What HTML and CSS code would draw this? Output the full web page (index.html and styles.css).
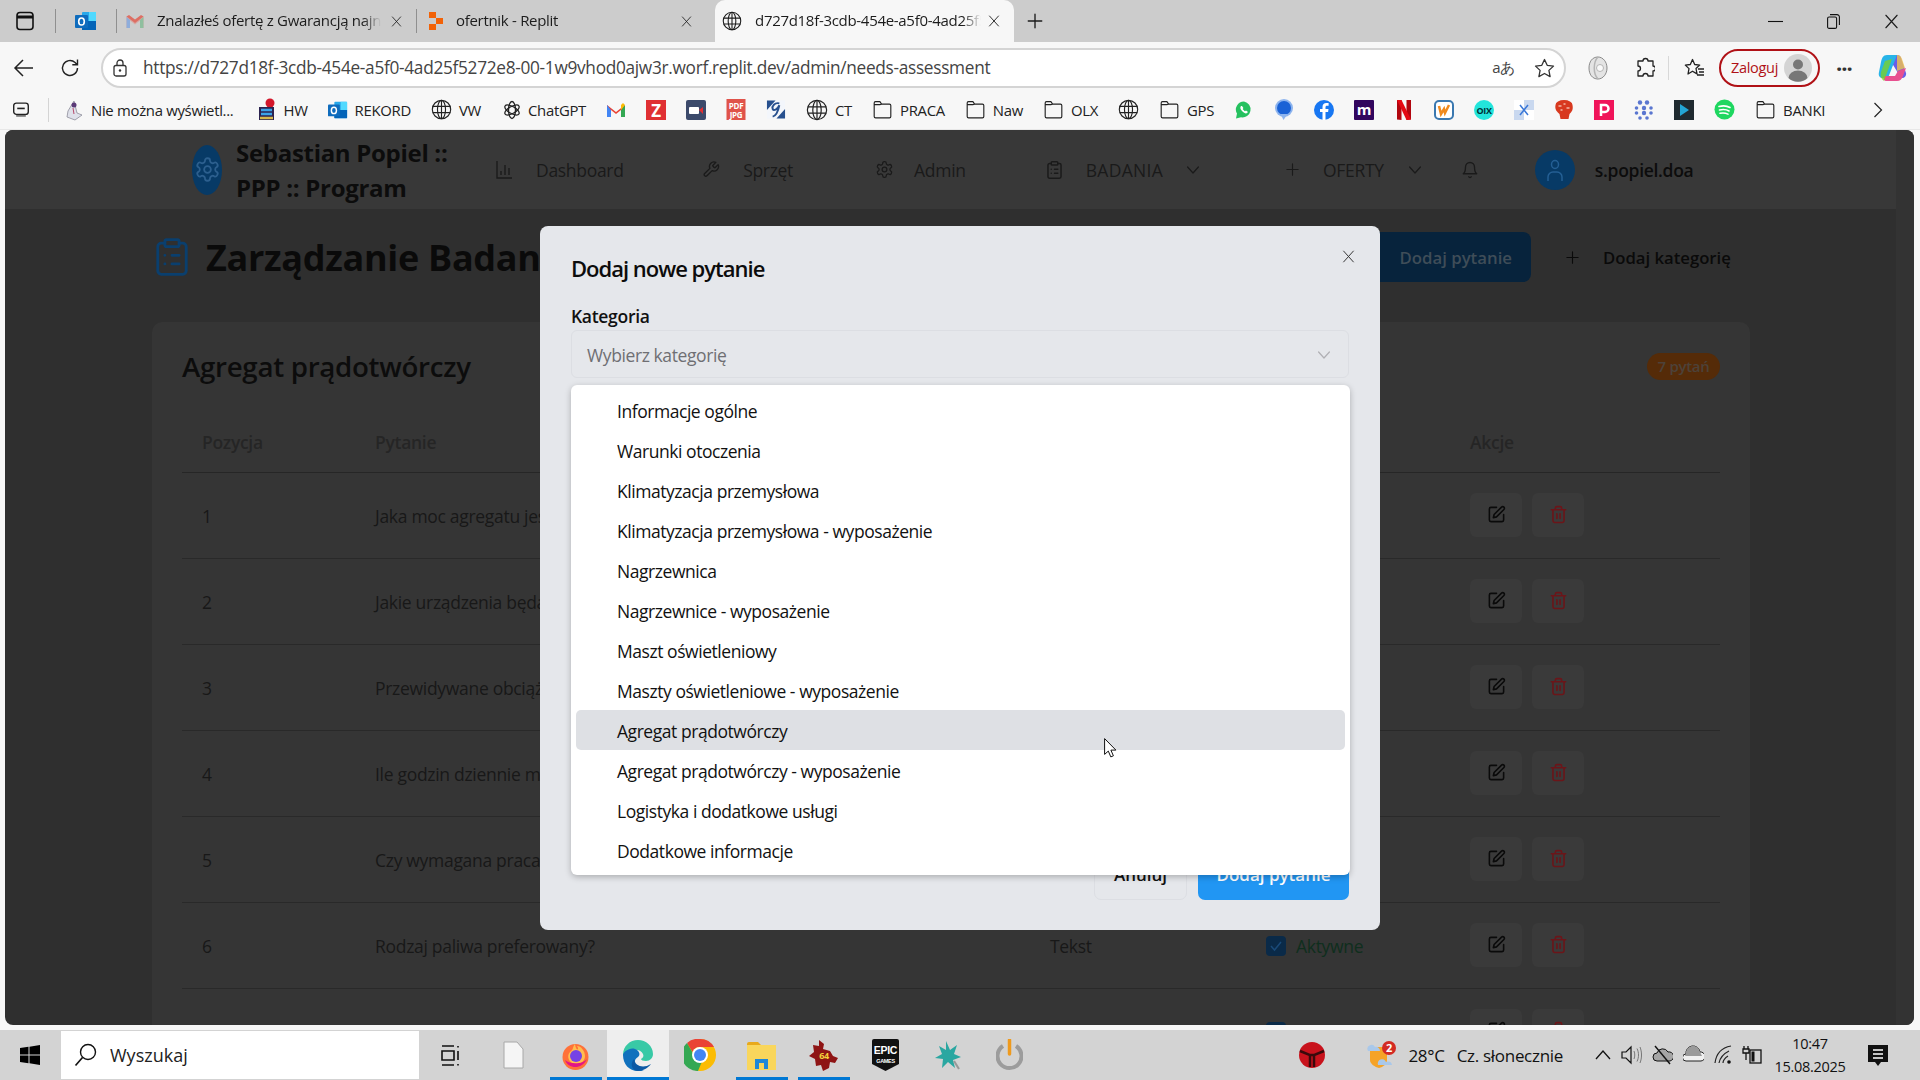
FILE: index.html
```html
<!DOCTYPE html>
<html lang="pl">
<head>
<meta charset="utf-8">
<title>Dodaj nowe pytanie</title>
<link rel="stylesheet" href="styles.css">
</head>
<body>
<svg class="defs" width="0" height="0">
	<symbol id="i-globe" viewBox="0 0 24 24"><g fill="none" stroke="currentColor" stroke-width="1.3"><circle cx="12" cy="12" r="10.5"/><ellipse cx="12" cy="12" rx="4.6" ry="10.5"/><path d="M2 8.5h20M2 15.5h20M12 1.5v21"/></g></symbol>
	<symbol id="i-folder" viewBox="0 0 24 24"><path fill="none" stroke="currentColor" stroke-width="1.3" d="M2.5 6.5V20a1.6 1.6 0 0 0 1.6 1.6h15.8a1.6 1.6 0 0 0 1.6-1.6V7.500a1.600 1.600 0 0 0-1.600-1.600H11L9 3H4a1.600 1.600 0 0 0-1.500 1.600zM2.500 6.500H9l2-.6"/></symbol>
	<symbol id="i-outlook" viewBox="0 0 22 22"><rect x="7" y="2" width="14" height="18" rx="1" fill="#28a8ea"/><rect x="14" y="2" width="7" height="9" fill="#50d9ff"/><rect x="7" y="11" width="14" height="9" fill="#0364b8"/><rect x="0" y="5" width="13" height="13" rx="1" fill="#0f6cbd"/><ellipse cx="6.500" cy="11.500" rx="2.800" ry="3.500" fill="none" stroke="#fff" stroke-width="1.600"/></symbol>
	<symbol id="i-gear" viewBox="0 0 24 24"><g fill="none" stroke="currentColor" stroke-width="1.6" stroke-linecap="round" stroke-linejoin="round"><path d="M12.220 2h-.44a2 2 0 0 0-2 2v.18a2 2 0 0 1-1 1.730l-.43.25a2 2 0 0 1-2 0l-.15-.08a2 2 0 0 0-2.730.73l-.22.38a2 2 0 0 0 .73 2.730l.15.1a2 2 0 0 1 1 1.720v.51a2 2 0 0 1-1 1.740l-.15.09a2 2 0 0 0-.73 2.730l.22.38a2 2 0 0 0 2.730.73l.15-.08a2 2 0 0 1 2 0l.43.25a2 2 0 0 1 1 1.730V20a2 2 0 0 0 2 2h.44a2 2 0 0 0 2-2v-.18a2 2 0 0 1 1-1.730l.43-.25a2 2 0 0 1 2 0l.15.08a2 2 0 0 0 2.730-.73l.22-.39a2 2 0 0 0-.73-2.730l-.15-.08a2 2 0 0 1-1-1.740v-.5a2 2 0 0 1 1-1.740l.15-.09a2 2 0 0 0 .73-2.730l-.22-.38a2 2 0 0 0-2.730-.73l-.15.08a2 2 0 0 1-2 0l-.43-.25a2 2 0 0 1-1-1.730V4a2 2 0 0 0-2-2z"/><circle cx="12" cy="12" r="3"/></g></symbol>
	<symbol id="i-clip" viewBox="3 1 18 22"><g fill="none" stroke="currentColor" stroke-width="1.800" stroke-linecap="round" stroke-linejoin="round"><rect x="8" y="2" width="8" height="4" rx="1"/><path d="M16 4h2a2 2 0 0 1 2 2v14a2 2 0 0 1-2 2H6a2 2 0 0 1-2-2V6a2 2 0 0 1 2-2h2M12 11h4M12 16h4M8 11h.01M8 16h.01"/></g></symbol>
	<symbol id="i-plus" viewBox="0 0 24 24"><path fill="none" stroke="currentColor" stroke-width="1.8" stroke-linecap="round" d="M12 3v18M3 12h18"/></symbol>
	<symbol id="i-chev" viewBox="2 6 20 12"><path fill="none" stroke="currentColor" stroke-width="2" stroke-linecap="round" stroke-linejoin="round" d="m3 7 9 10 9-10"/></symbol>
	<symbol id="i-x" viewBox="0 0 24 24"><path fill="none" stroke="currentColor" stroke-width="1.800" stroke-linecap="round" d="m3 2 18 20M21 2 3 22"/></symbol>
	<symbol id="i-edit" viewBox="0 0 24 24"><g fill="none" stroke="currentColor" stroke-width="2" stroke-linecap="round" stroke-linejoin="round"><path d="M12 3H5a2 2 0 0 0-2 2v14a2 2 0 0 0 2 2h14a2 2 0 0 0 2-2v-7"/><path d="M18.375 2.625a2.121 2.121 0 1 1 3 3L12 15l-4 1 1-4Z"/></g></symbol>
	<symbol id="i-trash" viewBox="0 0 24 24"><path fill="none" stroke="currentColor" stroke-width="2" stroke-linecap="round" stroke-linejoin="round" d="M3 6h18M19 6v14c0 1-1 2-2 2H7c-1 0-2-1-2-2V6M8 6V4c0-1 1-2 2-2h4c1 0 2 1 2 2v2M10 11v6M14 11v6"/></symbol>
</svg>

<div class="browser">
	<div class="tabstrip">
		<svg class="side-btn" width="20" height="20" viewBox="0 0 20 20"><rect x="2" y="1.500" width="16" height="17" rx="3" fill="none" stroke="#111" stroke-width="1.600"/><path d="M2 6h16" stroke="#111" stroke-width="3"/></svg>
		<span class="tab-sep"></span>
		<span class="pinned-tab"><svg width="22" height="22"><use href="#i-outlook"/></svg></span>
		<span class="tab-sep"></span>
		<div class="tab tab-gmail">
			<svg width="20" height="16" viewBox="0 0 20 16"><path d="M1.500 15V3l8.500 6.500L18.500 3v12h-3.500V7.500L10 11.500 5 7.500V15z" fill="#d8a7a2"/><path d="M1.500 3.500 4 2l6 4.500L16 2l2.500 1.500L10 10z" fill="#dd6e63"/><path d="M15 15h3.500V4L15 7z" fill="#8fbf9f"/><path d="M1.500 15H5V7L1.500 4z" fill="#8eaddb"/></svg>
			<span class="tab-title">Znalazłeś ofertę z Gwarancją najniższej ceny</span>
			<svg class="tab-close" width="11" height="11"><use href="#i-x"/></svg>
		</div>
		<span class="tab-sep"></span>
		<div class="tab tab-replit">
			<svg width="14" height="20" viewBox="0 0 14 20"><path d="M0 1h7v6H0zM7 7h7v6H7zM0 13h7v6H0z" fill="#f26207"/></svg>
			<span class="tab-title">ofertnik - Replit</span>
			<svg class="tab-close" width="11" height="11"><use href="#i-x"/></svg>
		</div>
		<div class="tab tab-active">
			<svg width="20" height="20"><use href="#i-globe"/></svg>
			<span class="tab-title">d727d18f-3cdb-454e-a5f0-4ad25f5272e8-00-1w9vhod0ajw3r</span>
			<svg class="tab-close" width="12" height="12"><use href="#i-x"/></svg>
		</div>
		<svg class="new-tab" width="18" height="18"><use href="#i-plus"/></svg>
		<div class="win-btns">
			<svg width="15" height="15" viewBox="0 0 15 15"><path d="M0 7.500h15" stroke="#111" stroke-width="1.100"/></svg>
			<svg width="13" height="15" viewBox="0 0 13 15"><rect x=".6" y="3" width="9" height="11.400" rx="1.500" fill="none" stroke="#111" stroke-width="1.100"/><path d="M3 .6h7a2.400 2.400 0 0 1 2.400 2.400v8" fill="none" stroke="#111" stroke-width="1.100"/></svg>
			<svg width="15" height="15"><use href="#i-x"/></svg>
		</div>
	</div>

	<div class="toolbar">
		<svg class="tb-back" width="21" height="20" viewBox="0 0 21 20"><path d="M20 10H2M10 2l-8 8 8 8" fill="none" stroke="#222" stroke-width="1.500"/></svg>
		<svg class="tb-reload" width="20" height="20" viewBox="0 0 20 20"><path d="M17.500 10a7.500 7.500 0 1 1-2.400-5.500L17 6.500M17.500 1.500v5.200h-5.200" fill="none" stroke="#222" stroke-width="1.400"/></svg>
		<div class="address">
			<svg width="14" height="18" viewBox="0 0 14 18"><rect x="1" y="6.500" width="12" height="10.500" rx="2" fill="none" stroke="#333" stroke-width="1.300"/><path d="M4 6.500V4a3 3 0 0 1 6 0v2.500" fill="none" stroke="#333" stroke-width="1.300"/><circle cx="7" cy="11.500" r="1.200" fill="#333"/></svg>
			<span class="url">https://d727d18f-3cdb-454e-a5f0-4ad25f5272e8-00-1w9vhod0ajw3r.worf.replit.dev/admin/needs-assessment</span>
			<span class="translate">aあ</span>
			<svg class="addr-star" width="21" height="20" viewBox="0 0 21 20"><path d="m10.500 1.500 2.700 5.800 6.300.8-4.600 4.300 1.200 6.200-5.600-3.100-5.600 3.100 1.200-6.200L1.500 8.100l6.300-.8z" fill="none" stroke="#333" stroke-width="1.300" stroke-linejoin="round"/></svg>
		</div>
		<svg class="tb-edge" width="20" height="24" viewBox="0 0 20 24"><path d="M10 1C4 1 1 6 1 12s3 11 9 11c5 0 9-5 9-11S15 1 10 1z" fill="#e4e4e4" stroke="#8a8a8a"/><path d="M10 1C5 6 5 18 10 23" fill="none" stroke="#b5b5b5" stroke-width="1.500"/><circle cx="12" cy="12" r="3.500" fill="#fafafa" stroke="#b5b5b5"/></svg>
		<svg class="tb-puzzle" width="19" height="22" viewBox="0 0 19 22"><path d="M7 4a2.500 2.500 0 0 1 5 0h5v5a2.500 2.500 0 0 1 0 5v5h-5a2.500 2.500 0 0 0-5 0H2v-5a2.500 2.500 0 0 0 0-5V4z" fill="none" stroke="#222" stroke-width="1.300" stroke-linejoin="round"/></svg>
		<span class="tb-sep"></span>
		<svg class="tb-fav" width="21" height="20" viewBox="0 0 21 20"><path d="m8.500 1.500 2.200 5 5 .6-3.700 3.400 1 5.400-4.500-2.700L4 16l1-5.400L1.300 7.100l5-.6zM14 11h6M15 14h5M13 17h7" fill="none" stroke="#222" stroke-width="1.300" stroke-linejoin="round"/></svg>
		<div class="signin">
			<span>Zaloguj</span>
			<svg width="28" height="28" viewBox="0 0 28 28"><circle cx="14" cy="14" r="14" fill="#d4d4d4"/><circle cx="14" cy="10.500" r="5" fill="#777"/><path d="M4.500 24a9.500 7.500 0 0 1 19 0 14 14 0 0 1-19 0z" fill="#777"/></svg>
		</div>
		<span class="tb-dots">···</span>
		<svg class="tb-copilot" width="29" height="30" viewBox="0 0 29 30"><path d="M9 2h10a4 4 0 0 1 4 3l5 15a4 4 0 0 1-4 5h-6l2-5z" fill="#6a5ee8"/><path d="M9 2C5 2 4 5 3 9L1 19c-1 4 1 6 4 6h5l9-23z" fill="#28b4e8"/><path d="M8 28h11c3 0 5-2 6-5l3-8-8 3-3 5H7c-2 0-2 5 1 5z" fill="#e8508f"/><path d="M3 19c-1 4 0 7 3 9l4-11 4-11-7 2z" fill="#7ed321" opacity=".75"/><path d="M19 2c3 0 4 2 5 4l3 9-8 3z" fill="#f3c24b" opacity=".8"/></svg>
	</div>

	<div class="bookmarks">
		<svg class="bm-collapse" width="18" height="15" viewBox="0 0 15 14"><rect x=".7" y="1" width="13.600" height="10.500" rx="2.500" fill="none" stroke="#222" stroke-width="1.300"/><path d="M4 6h7" stroke="#222" stroke-width="1.500"/><path d="M3 13h9" stroke="#222"/></svg>
		<span class="bm-sep"></span>
		<div class="bm">
			<svg width="19" height="22" viewBox="0 0 19 22"><path d="M9 2 3 12l-1 6 8 3 7-5-5-2z" fill="#dfe1ea" stroke="#8d8d99" stroke-width=".8"/><circle cx="9" cy="6" r="2.500" fill="#5b3a78"/><path d="M8 9l1 6" stroke="#b7496a"/></svg>
			<span>Nie można wyświetl...</span>
		</div>
		<div class="bm bm-hw">
			<svg width="19" height="24" viewBox="0 0 19 24"><circle cx="13" cy="5" r="4.500" fill="#d3172b"/><path d="M2 9h15v13H2z" fill="#2c2350"/><path d="M4 12h11M4 16h11" stroke="#3ba4e8" stroke-width="2.500"/><path d="M3 20h13" stroke="#d7b94a" stroke-width="2.500"/></svg>
			<span>HW</span>
		</div>
		<div class="bm">
			<svg width="20" height="20"><use href="#i-outlook"/></svg>
			<span>REKORD</span>
		</div>
		<div class="bm"><svg width="21" height="21"><use href="#i-globe"/></svg><span>VW</span></div>
		<div class="bm bm-gpt"><svg width="18" height="20" viewBox="0 0 18 20"><g fill="none" stroke="#222" stroke-width="1.300"><ellipse cx="9" cy="10" rx="8" ry="3.500" transform="rotate(30 9 10)"/><ellipse cx="9" cy="10" rx="8" ry="3.500" transform="rotate(-30 9 10)"/><ellipse cx="9" cy="10" rx="3.500" ry="8.500"/></g></svg><span>ChatGPT</span></div>
		<svg width="20" height="16" viewBox="0 0 20 16"><path d="M1 15V3l9 7 9-7v12h-4V8l-5 4-5-4v7z" fill="#ea4335"/><path d="M1 15h4V8L1 3z" fill="#4285f4"/><path d="M15 15h4V3l-4 5z" fill="#34a853"/><path d="M15 8l4-5-2-2-2 2z" fill="#fbbc04"/></svg>
		<svg width="20" height="20" viewBox="0 0 20 20"><rect width="20" height="20" fill="#e03033"/><text x="10" y="16.500" font-size="17" font-weight="700" text-anchor="middle" fill="#fff" font-family="Open Sans">Z</text></svg>
		<svg width="20" height="20" viewBox="0 0 20 20"><rect width="20" height="20" rx="2" fill="#3c4a6b"/><rect x="3" y="7" width="10" height="7" rx="1" fill="#fff"/><path d="m13 10 4-3v7z" fill="#e03033"/></svg>
		<svg width="20" height="21" viewBox="0 0 19 21"><rect width="19" height="21" fill="#e0534a"/><text x="9.500" y="9.500" font-size="8" font-weight="700" text-anchor="middle" fill="#fff" font-family="Open Sans">PDF</text><text x="9.500" y="18.500" font-size="8" font-weight="700" text-anchor="middle" fill="#fff" font-family="Open Sans">JPG</text></svg>
		<svg width="20" height="21" viewBox="0 0 21 21"><path d="M1 1h19v19H1z" fill="#f3f6fb"/><path d="M1 1h9L1 11zM20 20h-9l9-10z" fill="#27508e"/><path d="M14 4c-5-1-8 3-7 6 1 2 5 1 7-4-1 5-3 11-7 12" fill="none" stroke="#27508e" stroke-width="2"/></svg>
		<div class="bm"><svg width="22" height="22"><use href="#i-globe"/></svg><span>CT</span></div>
		<div class="bm"><svg width="21" height="21"><use href="#i-folder"/></svg><span>PRACA</span></div>
		<div class="bm"><svg width="21" height="21"><use href="#i-folder"/></svg><span>Naw</span></div>
		<div class="bm"><svg width="21" height="21"><use href="#i-folder"/></svg><span>OLX</span></div>
		<svg width="21" height="21"><use href="#i-globe"/></svg>
		<div class="bm"><svg width="21" height="21"><use href="#i-folder"/></svg><span>GPS</span></div>
		<svg width="20" height="20" viewBox="0 0 18 20"><path d="M9 1.500a8 8 0 0 0-7 12L1 18.500l5-1.200A8 8 0 1 0 9 1.500z" fill="#25c15f"/><path d="M6 6c-1 1-1 3 1 5s4 3 5 2l1-1-2-1.500-1 .7C9 10.500 8 9.500 7.700 9l.7-1L7 6z" fill="#fff"/></svg>
		<svg width="20" height="22" viewBox="0 0 19 22"><circle cx="9.500" cy="9" r="9" fill="#8db4ee"/><circle cx="9.500" cy="9" r="7" fill="#1a62d6"/><path d="M6 15l7 0-4 6z" fill="#8db4ee"/></svg>
		<svg width="20" height="20" viewBox="0 0 20 20"><circle cx="10" cy="10" r="10" fill="#1877f2"/><path d="M11.500 20v-8h2.600l.4-3h-3V7.300c0-.9.3-1.500 1.500-1.500h1.600V3.100c-.3 0-1.200-.1-2.300-.1-2.300 0-3.800 1.400-3.800 4V9H6v3h2.500v8z" fill="#fff"/></svg>
		<svg width="20" height="20" viewBox="0 0 20 20"><rect width="20" height="20" rx="1" fill="#32065e"/><text x="10" y="15" font-size="15" font-weight="700" text-anchor="middle" fill="#fff" font-family="Open Sans">m</text></svg>
		<svg width="20" height="20" viewBox="0 0 14 20"><path d="M0 0h4.500v20L0 19.500zM9.500 0H14v19.500L9.500 20z" fill="#b1060f"/><path d="M0 0h4.500l9.500 19.500L9.500 20z" fill="#e50914"/></svg>
		<svg width="20" height="20" viewBox="0 0 20 20"><rect x="1" y="1" width="18" height="18" rx="4" fill="#fff" stroke="#3a78b0" stroke-width="2"/><path d="m5 6 2 8 3-5 1 4 4-8" fill="none" stroke="#f08a1d" stroke-width="2.500"/></svg>
		<svg width="20" height="20" viewBox="0 0 20 20"><circle cx="10" cy="10" r="10" fill="#23e5db"/><text x="10" y="13.500" font-size="9" font-weight="700" text-anchor="middle" fill="#002f34" font-family="Open Sans">OIX</text></svg>
		<svg width="20" height="20" viewBox="0 0 20 20"><rect width="20" height="20" fill="#fff"/><path d="M10 0h10v10H10zM0 10h10v10H0z" fill="#c9d8ef"/><path d="m6 5 8 10M14 5 6 15" stroke="#3a78d8" stroke-width="1.500"/></svg>
		<svg width="20" height="20" viewBox="0 0 19 20"><path d="M1 5a8.500 5 0 0 1 17 0c1 5-1 7-3 9l-1 5H6l-1-5C3 12 0 10 1 5z" fill="#d8391f"/><path d="M4 6h3M9 4h2M12 8h3M6 10h2" stroke="#f4b9a8" stroke-width="1.500"/></svg>
		<svg width="20" height="20" viewBox="0 0 20 20"><rect width="20" height="20" fill="#f0145a"/><path d="M7 16V5h4a3.500 3.500 0 0 1 0 7H7" fill="none" stroke="#fff" stroke-width="2.500"/></svg>
		<svg width="20" height="20" viewBox="0 0 20 20" fill="#5a76d0"><circle cx="6" cy="2.500" r="2.200"/><circle cx="13" cy="2.500" r="2.200"/><circle cx="2.500" cy="8" r="1.800"/><circle cx="10" cy="8" r="2.200"/><circle cx="17" cy="8" r="1.800"/><circle cx="2.500" cy="13" r="1.800"/><circle cx="10" cy="13" r="2.200"/><circle cx="17" cy="13" r="1.800"/><circle cx="6" cy="18" r="1.800"/><circle cx="13" cy="18" r="1.800"/></svg>
		<svg width="20" height="20" viewBox="0 0 20 20"><rect width="20" height="20" fill="#1f2a30"/><path d="m6 4 9 6-9 6z" fill="#23a6d5"/></svg>
		<svg width="21" height="21" viewBox="0 0 21 21"><circle cx="10.500" cy="10.500" r="10" fill="#1ed760"/><path d="M5 7.500c4-1 8-.7 11 1M5.500 11c3.500-.8 7-.5 9.500 1M6 14.300c3-.7 5.500-.4 8 .8" fill="none" stroke="#fff" stroke-width="1.600" stroke-linecap="round"/></svg>
		<div class="bm"><svg width="21" height="21"><use href="#i-folder"/></svg><span>BANKI</span></div>
		<svg class="bm-more" width="10" height="16" viewBox="0 0 10 16"><path d="m1.500 1 7 7-7 7" fill="none" stroke="#222" stroke-width="1.200"/></svg>
	</div>

	<div class="page-wrap">
		<div class="page">
			<div class="app">
				<header class="app-header">
					<div class="container nav">
						<span class="logo"><svg width="27" height="27"><use href="#i-gear"/></svg></span>
						<span class="brand">Sebastian Popiel ::<br>PPP :: Program</span>
						<a class="nav-item nav-dash"><svg width="16" height="19" viewBox="0 0 16 19"><path d="M1 1v17h15M5 15v-4M9 15V5M13 15v-7" fill="none" stroke="currentColor" stroke-width="1.300"/></svg>Dashboard</a>
						<a class="nav-item nav-sprzet"><svg width="18" height="21" viewBox="0 0 24 24"><path fill="none" stroke="currentColor" stroke-width="1.800" stroke-linejoin="round" d="M14.700 6.300a1 1 0 0 0 0 1.400l1.600 1.600a1 1 0 0 0 1.400 0l3.770-3.770a6 6 0 0 1-7.940 7.940l-6.910 6.910a2.120 2.120 0 0 1-3-3l6.910-6.910a6 6 0 0 1 7.940-7.940l-3.760 3.760z"/></svg>Sprzęt</a>
						<a class="nav-item nav-admin"><svg width="19" height="19"><use href="#i-gear"/></svg>Admin</a>
						<a class="nav-item nav-badania"><svg width="15" height="18"><use href="#i-clip"/></svg>BADANIA<svg class="nav-chev" width="12" height="8"><use href="#i-chev"/></svg></a>
						<a class="nav-item nav-oferty"><svg width="15" height="15"><use href="#i-plus"/></svg>OFERTY<svg class="nav-chev" width="12" height="8"><use href="#i-chev"/></svg></a>
						<svg class="bell" width="18" height="20" viewBox="0 0 24 24"><path fill="none" stroke="currentColor" stroke-width="1.800" stroke-linecap="round" stroke-linejoin="round" d="M6 8a6 6 0 0 1 12 0c0 7 3 9 3 9H3s3-2 3-9M10.300 21a1.940 1.940 0 0 0 3.400 0"/></svg>
						<span class="avatar"><svg width="18" height="24" viewBox="0 0 18 24"><g fill="none" stroke="#245f94" stroke-width="1.500"><ellipse cx="9" cy="6.500" rx="3.500" ry="4"/><path d="M2 23v-4a5 5 0 0 1 5-5h4a5 5 0 0 1 5 5v4"/></g></svg></span>
						<span class="user-name">s.popiel.doa</span>
					</div>
				</header>

				<main class="container main">
					<div class="title-row">
						<svg class="title-icon" width="32" height="38" viewBox="3 1 18 22" preserveAspectRatio="none"><g fill="none" stroke="currentColor" stroke-width="1.600" stroke-linecap="round" stroke-linejoin="round"><rect x="8" y="2" width="8" height="4" rx="1"/><path d="M16 4h2a2 2 0 0 1 2 2v14a2 2 0 0 1-2 2H6a2 2 0 0 1-2-2V6a2 2 0 0 1 2-2h2M12 11h4M12 16h4M8 11h.01M8 16h.01"/></g></svg>
						<h1>Zarządzanie Badaniem Potrzeb</h1>
						<button class="btn-primary-dim">Dodaj pytanie</button>
						<button class="btn-ghost-dim"><svg width="15" height="15"><use href="#i-plus"/></svg>Dodaj kategorię</button>
					</div>

					<section class="card">
						<div class="card-head">
							<h2>Agregat prądotwórczy</h2>
							<span class="count">7 pytań</span>
						</div>
						<table class="qtable">
							<thead>
								<tr><th class="c-pos">Pozycja</th><th class="c-q">Pytanie</th><th class="c-type">Typ</th><th class="c-status">Status</th><th class="c-act">Akcje</th></tr>
							</thead>
							<tbody>
								<tr><td>1</td><td>Jaka moc agregatu jest potrzebna?</td><td>Tekst</td><td><span class="status"><i class="cb"></i>Aktywne</span></td><td><span class="acts"><b class="act"><svg width="19" height="19"><use href="#i-edit"/></svg></b><b class="act del"><svg width="19" height="19"><use href="#i-trash"/></svg></b></span></td></tr>
								<tr><td>2</td><td>Jakie urządzenia będą zasilane?</td><td>Tekst</td><td><span class="status"><i class="cb"></i>Aktywne</span></td><td><span class="acts"><b class="act"><svg width="19" height="19"><use href="#i-edit"/></svg></b><b class="act del"><svg width="19" height="19"><use href="#i-trash"/></svg></b></span></td></tr>
								<tr><td>3</td><td>Przewidywane obciążenie agregatu?</td><td>Tekst</td><td><span class="status"><i class="cb"></i>Aktywne</span></td><td><span class="acts"><b class="act"><svg width="19" height="19"><use href="#i-edit"/></svg></b><b class="act del"><svg width="19" height="19"><use href="#i-trash"/></svg></b></span></td></tr>
								<tr><td>4</td><td>Ile godzin dziennie ma pracować?</td><td>Tekst</td><td><span class="status"><i class="cb"></i>Aktywne</span></td><td><span class="acts"><b class="act"><svg width="19" height="19"><use href="#i-edit"/></svg></b><b class="act del"><svg width="19" height="19"><use href="#i-trash"/></svg></b></span></td></tr>
								<tr><td>5</td><td>Czy wymagana praca ciągła?</td><td>Tekst</td><td><span class="status"><i class="cb"></i>Aktywne</span></td><td><span class="acts"><b class="act"><svg width="19" height="19"><use href="#i-edit"/></svg></b><b class="act del"><svg width="19" height="19"><use href="#i-trash"/></svg></b></span></td></tr>
								<tr><td>6</td><td>Rodzaj paliwa preferowany?</td><td>Tekst</td><td><span class="status"><i class="cb"><svg width="14" height="14" viewBox="0 0 14 14"><path d="m2 7 3.500 4L12 3" fill="none" stroke="#1a4a78" stroke-width="1.500"/></svg></i>Aktywne</span></td><td><span class="acts"><b class="act"><svg width="19" height="19"><use href="#i-edit"/></svg></b><b class="act del"><svg width="19" height="19"><use href="#i-trash"/></svg></b></span></td></tr>
								<tr><td></td><td></td><td></td><td><span class="status"><i class="cb"></i></span></td><td><span class="acts"><b class="act"><svg width="19" height="19"><use href="#i-edit"/></svg></b><b class="act del"><svg width="19" height="19"><use href="#i-trash"/></svg></b></span></td></tr>
							</tbody>
						</table>
					</section>
				</main>
			</div>
			<div class="app-scrollbar"></div>

			<div class="overlay">
				<div class="dialog">
					<svg class="dialog-close" width="13" height="13"><use href="#i-x"/></svg>
					<h3>Dodaj nowe pytanie</h3>
					<label class="field-label">Kategoria</label>
					<div class="select-wrap">
						<div class="select">
							<span>Wybierz kategorię</span>
							<svg width="12" height="8"><use href="#i-chev"/></svg>
						</div>
						<ul class="popover">
							<li>Informacje ogólne</li>
							<li>Warunki otoczenia</li>
							<li>Klimatyzacja przemysłowa</li>
							<li>Klimatyzacja przemysłowa - wyposażenie</li>
							<li>Nagrzewnica</li>
							<li>Nagrzewnice - wyposażenie</li>
							<li>Maszt oświetleniowy</li>
							<li>Maszty oświetleniowe - wyposażenie</li>
							<li class="hover">Agregat prądotwórczy</li>
							<li>Agregat prądotwórczy - wyposażenie</li>
							<li>Logistyka i dodatkowe usługi</li>
							<li>Dodatkowe informacje</li>
						</ul>
					</div>
					<div class="dialog-foot">
						<button class="btn-cancel">Anuluj</button>
						<button class="btn-add">Dodaj pytanie</button>
					</div>
				</div>
			</div>
			<svg class="cursor" width="13" height="20" viewBox="0 0 13 20"><path d="M.6.6v15.800l3.700-3.300 2.500 5.800 2.600-1.100-2.500-5.700h5z" fill="#fff" stroke="#111" stroke-width="1"/></svg>
		</div>
	</div>
</div>

<div class="taskbar">
	<svg class="win-logo" width="20" height="20" viewBox="0 0 20 20"><path d="M0 3l8.500-1.200v7.700H0zM9.500 1.700 20 0v9.500H9.500zM0 10.500h8.500v7.700L0 17zM9.500 10.500H20V20L9.500 18.300z" fill="#000"/></svg>
	<div class="search">
		<svg width="23" height="24" viewBox="0 0 23 24"><circle cx="14" cy="9" r="7.500" fill="none" stroke="#111" stroke-width="1.400"/><path d="M8.500 14.500 1.500 22.500" stroke="#111" stroke-width="1.600"/></svg>
		<span>Wyszukaj</span>
	</div>
	<div class="task-view"><svg width="20" height="24" viewBox="0 0 20 24"><path d="M1 8h12v9H1zM1 3h12M1 22h12M17 3v1.500M17 8v9M17 21v1.500" fill="none" stroke="#111" stroke-width="1.600"/></svg></div>
	<div class="task-app"><svg width="21" height="28" viewBox="0 0 21 28"><path d="M1 1h13l6 7v19H1z" fill="#f5f5f5" stroke="#a8a8a8"/></svg></div>
	<div class="task-app run"><svg width="29" height="30" viewBox="0 0 29 30"><circle cx="14.500" cy="17" r="13" fill="#ff7139"/><path d="M14 4C11 8 13 9 9 12 5 16 8 24 15 24c6 0 9-4 9-8 0-5-4-10-8-10 3 4-1 6-2-2z" fill="#ffbd4f"/><circle cx="15" cy="16" r="6" fill="#7542e5"/><path d="M4 20c3 9 17 10 22-1-4 5-16 6-22 1z" fill="#e31587"/></svg></div>
	<div class="task-app active run"><svg width="31" height="31" viewBox="0 0 31 31"><path d="M1 15C1 6 8 0 16 0c8 0 15 6 15 14 0 4-3 7-7 7-3 0-5-1-5-2 2-1 3-3 2-5-2-5-11-6-16-1-2 1-3 3-4 2z" fill="#38c9a6"/><path d="M1 15c0-3 7-8 12-6 4 1 6 6 3 8-6 3-3 13 6 13-2 1-4 1-6 1C7 31 1 24 1 15z" fill="#1071bd"/><path d="M16 31c-5 0-9-6-4-12 1 7 9 10 17 5-3 4-8 7-13 7z" fill="#0c59a4"/></svg></div>
	<div class="task-app"><svg width="32" height="32" viewBox="0 0 32 32"><circle cx="16" cy="16" r="16" fill="#fbbc04"/><path d="M16 0a16 16 0 0 1 14 8H16a8 8 0 0 0-7.500 5L3 4A16 16 0 0 1 16 0z" fill="#ea4335"/><path d="M3 4l7 12a7 7 0 0 0 9 4l-5 12A16 16 0 0 1 3 4z" fill="#34a853"/><circle cx="16" cy="16" r="8" fill="#fff"/><circle cx="16" cy="16" r="6" fill="#4285f4"/></svg></div>
	<div class="task-app run"><svg width="29" height="30" viewBox="0 0 29 30"><path d="M0 4a2 2 0 0 1 2-2h9l3 3H0z" fill="#e8a91c"/><path d="M0 5h29v25H0z" fill="#f9d65c"/><path d="M8 29V19h13v10h-4v-6h-5v6z" fill="#1e88d8"/></svg></div>
	<div class="task-app run"><svg width="29" height="32" viewBox="0 0 29 32"><path d="M10 1l5 4-1 5 7 2 3 5 5 2-3 5-5-1-1 6-6 3-2-6-5 1-1-7-6-3 5-4-1-7 6 1z" fill="#8e1414"/><text x="15" y="20" font-size="9" font-weight="700" text-anchor="middle" fill="#f4d13c" font-family="Open Sans">64</text></svg></div>
	<div class="task-app"><svg width="27" height="32" viewBox="0 0 27 32"><path d="M2 0h23a2 2 0 0 1 2 2v23l-13.500 7L0 25V2a2 2 0 0 1 2-2z" fill="#111"/><text x="13.500" y="15" font-size="10.500" font-weight="700" text-anchor="middle" fill="#fff" font-family="Liberation Sans">EPIC</text><text x="13.500" y="24" font-size="5.500" font-weight="700" text-anchor="middle" fill="#fff" font-family="Liberation Sans">GAMES</text></svg></div>
	<div class="task-app"><svg width="28" height="32" viewBox="0 0 28 32"><path d="M12 2l4 9 7-5-3 9 7 3-8 3 2 8-7-6-6 6 1-9-8-1 7-4-3-8 7 4z" fill="#2aa7a1"/><path d="M20 22l5 8" stroke="#999" stroke-width="2"/></svg></div>
	<div class="task-app"><svg width="27" height="32" viewBox="0 0 27 32"><path d="M7 7a12 12 0 1 0 13 0" fill="none" stroke="#9c9c9c" stroke-width="4"/><path d="M13.500 1v14" stroke="#ef9a1d" stroke-width="3.500" stroke-linecap="round"/></svg></div>

	<div class="tray">
		<svg class="tray-lenovo" width="26" height="26" viewBox="0 0 26 26"><ellipse cx="13" cy="13" rx="13" ry="13" fill="#c8121c"/><path d="M1 9l10 4v12M25 9l-10 4v12M11 13h4" fill="none" stroke="#3a0a0c" stroke-width="2.500"/></svg>
		<svg class="tray-weather" width="32" height="28" viewBox="0 0 32 28"><path d="M4 6h17v13c0 4-4 7-8 8-4-1-9-4-9-8z" fill="#f5a327"/><path d="M2 10a4 4 0 0 1 7-4 4 4 0 0 1 5 4z" fill="#a9c8ea"/><path d="M12 24a4 4 0 0 1 8-3 4 4 0 0 1 6 3z" fill="#a9c8ea"/><circle cx="23" cy="7" r="7" fill="#d32a22"/><text x="23" y="11" font-size="11" font-weight="700" text-anchor="middle" fill="#fff" font-family="Open Sans">2</text></svg>
		<span class="temp">28°C</span>
		<span class="sky">Cz. słonecznie</span>
		<svg class="tray-chev" width="16" height="10" viewBox="0 0 16 10"><path d="m1 9 7-8 7 8" fill="none" stroke="#111" stroke-width="1.300"/></svg>
		<svg class="tray-ico" width="21" height="20" viewBox="0 0 21 20"><path d="M1 7h4l5-5v16l-5-5H1z" fill="none" stroke="#111" stroke-width="1.200"/><path d="M13 6c1 3 1 5 0 8M16 3.500c2 4 2 9 0 13M19 2c2 5 2 11 0 16" fill="none" stroke="#777" stroke-width="1"/></svg>
		<svg class="tray-ico" width="21" height="20" viewBox="0 0 21 20"><path d="M5 16a4 4 0 0 1 0-8 6 6 0 0 1 11-1 4 4 0 0 1 2 9z" fill="#a5a5a5" stroke="#111"/><path d="M3 1l15 18" stroke="#111" stroke-width="1.400"/></svg>
		<svg class="tray-ico" width="21" height="20" viewBox="0 0 21 20"><path d="M3 16a3.500 3.500 0 0 1 0-7A7 7 0 0 1 17 7a4 4 0 0 1 1 9z" fill="#f0f0f0" stroke="#222"/><path d="M3 9A7 7 0 0 1 17 7l2 4H2z" fill="#9a9a9a"/></svg>
		<svg class="tray-ico" width="18" height="20" viewBox="0 0 18 20"><path d="M1 18C2 10 6 3 17 1M5 18c1-5 4-9 10-12M9 18c0-3 2-5 5-7" fill="none" stroke="#222" stroke-width="1.200"/><circle cx="15" cy="17" r="1.800" fill="#111"/></svg>
		<svg class="tray-ico" width="20" height="20" viewBox="0 0 20 20"><rect x="8" y="5" width="11" height="13" fill="none" stroke="#111" stroke-width="1.300"/><rect x="9.500" y="6.500" width="3" height="10" fill="#111"/><path d="M2 1v3M6 1v3M1 4h6v4H1zM4 8v7" fill="none" stroke="#111" stroke-width="1.300"/></svg>
		<div class="clock"><span>10:47</span><span>15.08.2025</span></div>
		<svg class="tray-note" width="20" height="21" viewBox="0 0 20 21"><path d="M0 0h20v17h-7l-3 4-3-4H0z" fill="#111"/><path d="M5 5h10M5 9h10M5 13h10" stroke="#fff" stroke-width="1.300"/></svg>
	</div>
</div>
</body>
</html>
```

FILE: styles.css
```css
* {
	box-sizing: border-box;
}
html, body {
	margin: 0;
	height: 100%;
}
body {
	width: 1920px;
	height: 1080px;
	overflow: hidden;
	font-family: "Open Sans", "Liberation Sans", sans-serif;
	letter-spacing: -0.3px;
	color: #111;
	display: flex;
	flex-direction: column;
	background: #f0f0f0;
}
.defs {
	position: absolute;
}
svg {
	flex: none;
	display: block;
}

/* browser chrome */
.browser {
	height: 1030px;
	display: flex;
	flex-direction: column;
	background: #f7f7f7;
}
.tabstrip {
	height: 42px;
	background: #cccccc;
	display: flex;
	align-items: center;
	font-size: 15px;
	color: #1c1c1c;
}
.side-btn {
	margin: 0 20px 0 15px;
}
.tab-sep {
	width: 1px;
	height: 24px;
	background: #8f8f8f;
}
.pinned-tab {
	width: 60px;
	display: flex;
	justify-content: center;
}
.tab {
	height: 42px;
	display: flex;
	align-items: center;
	position: relative;
}
.tab-gmail {
	width: 299px;
	padding-left: 8px;
}
.tab-replit {
	width: 298px;
	padding-left: 12px;
}
.tab-active {
	width: 299px;
	padding-left: 7px;
	background: #f7f7f7;
	border-radius: 10px 10px 0 0;
}
.tab-title {
	white-space: nowrap;
	overflow: hidden;
	margin-top: -3px;
	-webkit-mask-image: linear-gradient(to right, #000 92%, transparent);
	mask-image: linear-gradient(to right, #000 92%, transparent);
}
.tab-gmail .tab-title {
	width: 224px;
	margin-left: 12px;
	margin-right: 10px;
}
.tab-replit .tab-title {
	width: 215px;
	margin-left: 13px;
	margin-right: 10px;
}
.tab-active .tab-title {
	width: 226px;
	margin-left: 13px;
	margin-right: 7px;
}
.new-tab {
	margin-left: 12px;
}
.win-btns {
	margin-left: auto;
	display: flex;
	align-items: center;
	gap: 44px;
	padding-right: 21px;
}

.toolbar {
	height: 46px;
	padding-top: 5px;
	display: flex;
	align-items: center;
}
.tb-back {
	margin-left: 13px;
}
.tb-reload {
	margin-left: 26px;
}
.address {
	margin-left: 21px;
	width: 1465px;
	height: 40px;
	background: #fff;
	border: 2px solid #d4d4d4;
	border-radius: 20px;
	display: flex;
	align-items: center;
	padding-left: 10px;
	font-size: 17.250px;
	color: #444;
}
.url {
	margin-left: 16px;
	white-space: nowrap;
}
.translate {
	margin-left: auto;
	font-size: 15px;
	color: #444;
}
.addr-star {
	margin: 0 9px 0 19px;
}
.tb-edge {
	margin-left: 22px;
}
.tb-puzzle {
	margin-left: 28px;
}
.tb-sep {
	width: 1px;
	height: 24px;
	background: #d8d8d8;
	margin-left: 13px;
}
.tb-fav {
	margin-left: 15px;
}
.signin {
	margin-left: 14px;
	width: 101px;
	height: 38px;
	border: 2px solid #b01116;
	border-radius: 19px;
	color: #b01116;
	font-size: 14.500px;
	display: flex;
	align-items: center;
	padding-left: 10px;
	gap: 6px;
}
.tb-dots {
	margin-left: 16px;
	font-size: 22px;
	font-weight: 700;
	color: #333;
	letter-spacing: -1px;
}
.tb-copilot {
	margin-left: 26px;
}

.bookmarks {
	height: 42px;
	padding-top: 2px;
	display: flex;
	align-items: center;
	gap: 20px;
	font-size: 14.900px;
	color: #222;
	border-bottom: 1px solid #e8e8e8;
}
.bm-collapse {
	margin-left: 12px;
}
.bm-sep {
	width: 1px;
	height: 24px;
	background: #d4d4d4;
	margin: 0 -4px 0 -2px;
}
.bm {
	display: flex;
	align-items: center;
	gap: 7px;
	white-space: nowrap;
}
.bm-hw {
	margin-left: 4px;
}
.bm-gpt {
	margin-left: 2px;
}
.bm-more {
	margin-left: 28px;
}

/* dimmed page behind the dialog */
.page-wrap {
	flex: 1;
	min-height: 0;
	padding: 0 6px 5px 5px;
}
.page {
	height: 100%;
	position: relative;
	overflow: hidden;
	border-radius: 8px;
	background: #2f2f2f;
	display: flex;
}
.app {
	flex: 1;
	min-width: 0;
}
.app-scrollbar {
	width: 18px;
	background: #333;
}
.app-header {
	height: 80px;
	background: #383838;
	border-bottom: 1px solid #2f2f2f;
}
.container {
	width: 1598px;
	margin-left: 147px;
}
.nav {
	height: 79px;
	padding-left: 40px;
	display: flex;
	align-items: center;
	font-size: 17.500px;
	color: #1a1a1a;
}
.logo {
	width: 30px;
	height: 50px;
	border-radius: 50%;
	background: #073a66;
	display: flex;
	align-items: center;
	justify-content: center;
}
.logo svg {
	color: #2c5f8e;
}
.brand {
	margin-left: 14px;
	font-size: 24px;
	line-height: 35px;
	font-weight: 700;
	color: #0c0c0c;
	white-space: nowrap;
	width: 260px;
}
.nav-item {
	display: flex;
	align-items: center;
	gap: 24px;
	white-space: nowrap;
}
.nav-sprzet {
	margin-left: 78.500px;
	gap: 23px;
}
.nav-admin {
	margin-left: 82px;
	gap: 20px;
}
.nav-badania {
	margin-left: 81px;
	gap: 24px;
	letter-spacing: .3px;
}
.nav-oferty {
	margin-left: 86px;
	gap: 23px;
}
.nav-oferty .nav-chev {
	margin-left: 2px;
}
.bell {
	margin-left: 40px;
}
.avatar {
	margin-left: 56px;
	width: 40px;
	height: 40px;
	border-radius: 50%;
	background: #073a66;
	display: flex;
	align-items: center;
	justify-content: center;
}
.user-name {
	margin-left: 20px;
	font-weight: 600;
	color: #0c0c0c;
}

.title-row {
	height: 112px;
	padding: 0 20px 18px 4px;
	display: flex;
	align-items: center;
}
.title-icon {
	color: #0a3f6e;
}
h1 {
	margin: 0 0 0 18px;
	font-size: 36px;
	font-weight: 700;
	color: #0a0a0a;
	white-space: nowrap;
}
.btn-primary-dim {
	margin-left: auto;
	height: 50px;
	width: 180px;
	border: 0;
	border-radius: 8px;
	background: #07233c;
	color: #3f4d58;
	font: inherit;
	font-size: 16.800px;
	font-weight: 600;
	text-align: right;
	padding-right: 19px;
}
.btn-ghost-dim {
	margin-left: 34px;
	border: 0;
	background: none;
	display: flex;
	align-items: center;
	gap: 23px;
	font: inherit;
	font-size: 16.700px;
	font-weight: 600;
	color: #0a0a0a;
	padding: 0;
	width: 165px;
	white-space: nowrap;
}

.card {
	height: 800px;
	background: #353535;
	border-radius: 10px;
	padding: 0 30px;
}
.card-head {
	height: 90px;
	display: flex;
	align-items: center;
	justify-content: space-between;
	padding-bottom: 2px;
}
h2 {
	margin: 0;
	font-size: 27.700px;
	font-weight: 600;
	color: #0c0c0c;
}
.count {
	height: 27px;
	width: 73px;
	border-radius: 14px;
	background: #552b08;
	color: #4d4239;
	font-size: 15px;
	font-weight: 600;
	display: flex;
	align-items: center;
	justify-content: center;
}
.qtable {
	width: 1538px;
	table-layout: fixed;
	border-collapse: collapse;
	font-size: 17.500px;
	color: #181818;
}
.qtable th {
	height: 60px;
	font-weight: 600;
	color: #252525;
	text-align: left;
	border-bottom: 1px solid #262626;
}
.qtable td {
	height: 86px;
	padding-top: 2px;
	border-bottom: 1px solid #292929;
}
.qtable th:first-child,
.qtable td:first-child {
	padding-left: 20px;
}
.c-pos { width: 192px; }
.c-q { width: 675px; }
.c-type { width: 216px; }
.c-status { width: 204px; }
.c-act { width: 251px; }
.status {
	display: flex;
	align-items: center;
	gap: 10px;
	color: #0f2e1d;
}
.cb {
	width: 20px;
	height: 20px;
	border-radius: 4px;
	background: #0a2a48;
	display: flex;
	align-items: center;
	justify-content: center;
}
.acts {
	display: flex;
	gap: 10px;
	margin-top: -2px;
}
.act {
	width: 52px;
	height: 44px;
	border-radius: 6px;
	background: #3a3a3a;
	color: #0a0a0a;
	display: flex;
	align-items: center;
	justify-content: center;
}
.del {
	color: #6b1519;
}

/* dialog */
.overlay {
	position: absolute;
	inset: 0;
	display: flex;
	align-items: center;
	justify-content: center;
}
.dialog {
	width: 840px;
	height: 704px;
	margin-left: 1px;
	background: #e5e7eb;
	border-radius: 8px;
	padding: 0 31px;
	position: relative;
	display: flex;
	flex-direction: column;
}
.dialog-close {
	position: absolute;
	top: 24px;
	right: 25px;
	color: #333;
}
h3 {
	margin: 26px 0 0;
	font-size: 22px;
	letter-spacing: -1px;
	font-weight: 600;
	line-height: 32px;
	color: #0c0c0c;
}
.field-label {
	margin-top: 20px;
	font-size: 17.500px;
	font-weight: 600;
	line-height: 24px;
	color: #111;
}
.select-wrap {
	margin-top: 2px;
	position: relative;
}
.select {
	height: 48px;
	border: 1px solid #dcdee3;
	border-radius: 6px;
	display: flex;
	align-items: center;
	justify-content: space-between;
	padding: 2px 18px 0 15px;
	font-size: 17.500px;
	letter-spacing: -.4px;
	color: #6f6f73;
}
.select svg {
	color: #b0b0b4;
}
.popover {
	position: absolute;
	top: 55px;
	left: 0;
	right: -1px;
	z-index: 2;
	margin: 0;
	padding: 5px;
	list-style: none;
	background: #fff;
	border-radius: 6px;
	box-shadow: 0 2px 6px rgba(0, 0, 0, .25);
	font-size: 17.500px;
	letter-spacing: -.45px;
	color: #111;
}
.popover li {
	height: 40px;
	line-height: 42px;
	padding-left: 41px;
	border-radius: 5px;
}
.popover .hover {
	background: #dee0e4;
}
.dialog-foot {
	margin-top: auto;
	margin-bottom: 30px;
	display: flex;
	justify-content: flex-end;
	gap: 11px;
}
.dialog-foot button {
	height: 50px;
	border-radius: 7px;
	font: inherit;
	font-size: 17px;
	font-weight: 600;
}
.btn-cancel {
	width: 93px;
	background: #e5e7eb;
	border: 1px solid #dcdee3;
	color: #111;
}
.btn-add {
	width: 151px;
	background: #2196f3;
	border: 0;
	color: #fff;
}
.cursor {
	position: absolute;
	z-index: 3;
	left: 1099px;
	top: 608px;
}

/* windows taskbar */
.taskbar {
	height: 50px;
	background: #d3d3d3;
	display: flex;
	align-items: center;
	margin-top: auto;
}
.win-logo {
	margin: 0 21px 0 20px;
}
.search {
	width: 358px;
	height: 48px;
	background: #fff;
	display: flex;
	align-items: center;
	padding-left: 13px;
	gap: 13px;
	font-size: 18px;
	letter-spacing: 0;
	color: #222;
}
.task-view {
	width: 63.500px;
	display: flex;
	justify-content: center;
}
.task-app {
	width: 62px;
	height: 50px;
	display: flex;
	align-items: center;
	justify-content: center;
	position: relative;
}
.task-app.active {
	background: #eeeeee;
}
.task-app.run::after {
	content: "";
	position: absolute;
	left: 5px;
	right: 5px;
	bottom: 0;
	height: 3px;
	background: #0078d4;
}
.task-app.active::after {
	left: 0;
	right: 0;
}
.tray {
	margin-left: auto;
	padding-right: 32px;
	display: flex;
	align-items: center;
	font-size: 17px;
	color: #111;
}
.tray-weather {
	margin-left: 41px;
}
.temp {
	margin-left: 10px;
}
.sky {
	margin-left: 12px;
}
.tray-chev {
	margin-left: 32px;
}
.tray-ico {
	margin-left: 10px;
}
.clock {
	margin-left: 14px;
	width: 68px;
	display: flex;
	flex-direction: column;
	align-items: center;
	gap: 5px;
	font-size: 14.500px;
	line-height: 18px;
	white-space: nowrap;
}
.tray-note {
	margin-left: 24px;
}
```
